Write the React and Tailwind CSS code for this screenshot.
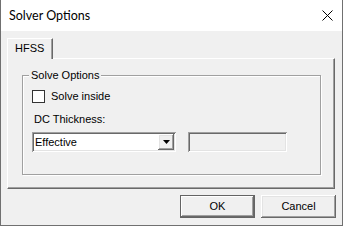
import React from "react";

const sunken =
  "shadow-[inset_1px_1px_0_#a0a0a0,inset_-1px_-1px_0_#ffffff,inset_2px_2px_0_#696969,inset_-2px_-2px_0_#e3e3e3]";
const raised =
  "shadow-[inset_-1px_-1px_0_#696969,inset_1px_1px_0_#ffffff,inset_-2px_-2px_0_#a0a0a0,inset_2px_2px_0_#e3e3e3]";

export default function App() {
  const sans = { fontFamily: '"Liberation Sans", Arial, sans-serif' };
  return (
    <div
      className="w-[343px] h-[226px] bg-[#f0f0f0] border-l border-r border-b border-[#707070] flex flex-col text-black text-[11px] leading-[13px]"
      style={sans}
    >
      {/* Title bar */}
      <div className="h-[31px] bg-white flex items-center justify-between pl-[8px] pr-[9px] shrink-0">
        <span
          className="text-[12.5px] leading-[16px]"
          style={{ fontFamily: 'Lato, "Noto Sans", sans-serif' }}
        >
          Solver Options
        </span>
        <svg width="11" height="11" viewBox="0 0 11 11" className="block">
          <path d="M0.5 0.5 L10.5 10.5 M10.5 0.5 L0.5 10.5" stroke="#000" strokeWidth="1" />
        </svg>
      </div>

      {/* Body */}
      <div className="flex flex-col pt-[7px] pl-[6px] pr-[7px]">
        {/* Tab strip */}
        <div className="flex">
          <div className="relative z-10 -mb-px w-[46px] h-[21px] bg-[#f0f0f0] border-t border-l border-r border-t-white border-l-white border-r-[#696969] shadow-[inset_-1px_0_0_#a0a0a0] pl-[7px] pt-[3px]">
            HFSS
          </div>
        </div>
        {/* Tab panel */}
        <div className="h-[131px] border-t border-l border-r border-b border-t-white border-l-white border-r-[#696969] border-b-[#696969] shadow-[inset_-1px_-1px_0_#a0a0a0] pt-[10px] pl-[14px]">
          <fieldset className="w-[299px] h-[106px] border border-[#a0a0a0] shadow-[1px_1px_0_#ffffff,inset_1px_1px_0_#ffffff] flex flex-col">
            <legend className="ml-[6px] px-[2px] bg-[#f0f0f0] leading-[13px]">Solve Options</legend>
            <div className="flex items-center mt-[8px] ml-[9px] h-[13px]">
              <div className="w-[13px] h-[13px] bg-white border border-[#333333]" />
              <span className="ml-[6px]">Solve inside</span>
            </div>
            <div className="mt-[10px] ml-[11px]">DC Thickness:</div>
            <div className="flex mt-[6px] ml-[9px] gap-[12px]">
              <div className={`w-[144px] h-[20px] bg-white p-[2px] flex ${sunken}`}>
                <div className="flex-1 pl-[1px] flex items-center">Effective</div>
                <div className={`w-[16px] h-full bg-[#f0f0f0] flex items-center justify-center ${raised}`}>
                  <svg width="7" height="4" viewBox="0 0 7 4" className="block">
                    <path d="M0 0 H7 L3.5 4 Z" fill="#000" />
                  </svg>
                </div>
              </div>
              <div className={`w-[99px] h-[20px] bg-[#f0f0f0] ${sunken}`} />
            </div>
          </fieldset>
        </div>
        {/* Buttons */}
        <div className="flex justify-end gap-[6px] mt-[6px] -mr-px">
          <button className="w-[75px] h-[23px] bg-[#f0f0f0] border border-[#646464] shadow-[inset_-1px_-1px_0_#696969,inset_1px_1px_0_#ffffff,inset_-2px_-2px_0_#a0a0a0] flex items-center justify-center">
            OK
          </button>
          <button className={`w-[75px] h-[23px] bg-[#f0f0f0] flex items-center justify-center ${raised}`}>
            Cancel
          </button>
        </div>
      </div>
    </div>
  );
}
